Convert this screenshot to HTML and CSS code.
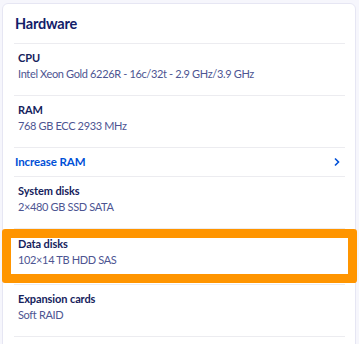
FILE: index.html
```html
<!DOCTYPE html>
<html lang="en">
  <head>
    <meta charset="UTF-8" />
    <meta name="viewport" content="width=device-width, initial-scale=1.0" />
    <title>Hardware</title>
    <link rel="stylesheet" href="styles.css">
  </head>
  <body>
    <div class="card">
      <h2 class="card-title">Hardware</h2>
      <div class="row">
        <div class="label">CPU</div>
        <div class="value">Intel Xeon Gold 6226R - 16c/32t - 2.9 GHz/3.9 GHz</div>
      </div>
      <div class="row">
        <div class="label">RAM</div>
        <div class="value">768 GB ECC 2933 MHz</div>
      </div>
      <a class="link-row" href="#">
        <span>Increase RAM</span>
        <svg width="8" height="10" viewBox="0 0 8 10"><path d="M2 1.5 L5.5 5 L2 8.5" fill="none" stroke="#0050d7" stroke-width="1.6"/></svg>
      </a>
      <div class="row">
        <div class="label">System disks</div>
        <div class="value">2×480 GB SSD SATA</div>
      </div>
      <div class="row highlight">
        <div class="label">Data disks</div>
        <div class="value">102×14 TB HDD SAS</div>
      </div>
      <div class="row">
        <div class="label">Expansion cards</div>
        <div class="value">Soft RAID</div>
      </div>
    </div>
  </body>
</html>
```

FILE: styles.css
```css
body {
  margin: 0;
  background: #f6f6fc;
  font-family: "Source Sans Pro", Lato, "Open Sans", sans-serif;
  overflow: hidden;
}
.card {
  margin: 3px 3px 0 2px;
  height: 360px;
  padding: 0 10px 0 11px;
  background: #fff;
  border: 1px solid #e6e6f3;
  border-radius: 6px;
}
.card-title {
  margin: 0;
  padding: 10px 0 9px 1px;
  font-size: 14.5px;
  line-height: 20px;
  letter-spacing: -0.2px;
  font-weight: 700;
  color: #122069;
  border-bottom: 1px solid #ececf0;
}
.row {
  padding: 6px 0 13px 4px;
  border-bottom: 1px solid #ececf0;
}
.label {
  font-size: 11px;
  line-height: 16px;
  letter-spacing: -0.1px;
  font-weight: 700;
  color: #15225c;
}
.value {
  font-size: 11px;
  line-height: 16px;
  letter-spacing: -0.35px;
  color: #4d5592;
}
.link-row {
  display: flex;
  justify-content: space-between;
  align-items: center;
  padding: 6px 4px 6px 1px;
  font-size: 11.5px;
  line-height: 16px;
  letter-spacing: -0.1px;
  font-weight: 700;
  color: #0050d7;
  text-decoration: none;
  border-bottom: 1px solid #ececf0;
}
.highlight {
  position: relative;
  padding: 7px 0 16px 4px;
}
.highlight::after {
  content: "";
  position: absolute;
  top: 0;
  bottom: 1px;
  left: -12px;
  right: -12px;
  border: 9px solid #ff9500;
  border-radius: 3px;
}
```
